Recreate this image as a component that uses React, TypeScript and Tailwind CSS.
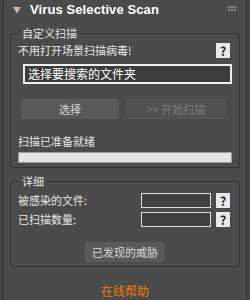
import React from 'react';

const font = { fontFamily: '"Noto Sans CJK SC", "Liberation Sans", sans-serif' };

const Help = () => (
  <div className="w-[14px] h-[15px] bg-[#e8e8e8] flex items-center justify-center text-[12px] leading-none font-bold text-[#222]">
    ?
  </div>
);

const App = () => {
  return (
    <div className="w-[250px] h-[300px] overflow-hidden bg-[#444444] px-[3px]" style={font}>
      <div className="h-[320px] -mt-[2px] border border-[#363636] rounded-[3px] bg-[#4b4b4b]">
        <div className="h-[22px] flex items-center pl-[9px] pr-[10px]">
          <span className="text-[#bdbdbd] text-[8px] mr-[9px]">▼</span>
          <span className="text-white font-bold text-[13px] tracking-[0.1px]" style={{ fontFamily: '"Liberation Sans", sans-serif' }}>
            Virus Selective Scan
          </span>
          <div className="ml-auto grid grid-cols-3 gap-[1px] -mt-[3px]">
            {Array.from({ length: 6 }).map((_, i) => (
              <div key={i} className="w-[2px] h-[2px] bg-[#8a8a8a]" />
            ))}
          </div>
        </div>

        <fieldset className="mx-[6px] mt-[5px] h-[142px] border border-[#333] rounded-[3px] px-[7px]">
          <legend className="ml-[1px] px-[3px] text-[11px] leading-[14px] text-[#e6e6e6]">自定义扫描</legend>
          <div className="flex items-center justify-between h-[17px] mt-[2px]">
            <span className="text-[11px] text-[#e6e6e6]">不用打开场景扫描病毒!</span>
            <div className="mr-[2px]"><Help /></div>
          </div>
          <div className="mt-[5px] ml-[5px] h-[20px] border-2 border-[#efefef] bg-[#3c3c3c] flex items-center px-[3px] text-[12px] text-white">
            选择要搜索的文件夹
          </div>
          <div className="mt-[15px] flex gap-[8px] pl-[3px]">
            <div className="w-[98px] h-[20px] rounded-[3px] bg-[#595959] flex items-center justify-center text-[11px] text-[#d6d6d6]">选择</div>
            <div className="w-[98px] h-[20px] rounded-[3px] bg-[#515151] border border-[#575757] flex items-center justify-center text-[11px] text-[#7c7c7c]">&gt;&gt; 开始扫描</div>
          </div>
          <div className="mt-[15px] text-[11px] text-[#e6e6e6] h-[15px] leading-[15px]">扫描已准备就绪</div>
          <div className="mt-[3px] h-[11px] bg-[#e4e4e4] border border-[#999]" />
        </fieldset>

        <fieldset className="mx-[6px] mt-[6px] h-[93px] border border-[#333] rounded-[3px] px-[7px]">
          <legend className="ml-[1px] px-[3px] text-[11px] leading-[14px] text-[#e6e6e6]">详细</legend>
          <div className="flex items-center h-[15px] mt-[5px]">
            <span className="text-[11px] text-[#e6e6e6]">被感染的文件:</span>
            <div className="ml-auto w-[70px] h-[15px] border border-[#ddd] bg-[#404040]" />
            <div className="ml-[5px] mr-[2px]"><Help /></div>
          </div>
          <div className="flex items-center h-[15px] mt-[4px]">
            <span className="text-[11px] text-[#e6e6e6]">已扫描数量:</span>
            <div className="ml-auto w-[70px] h-[15px] border border-[#ddd] bg-[#404040]" />
            <div className="ml-[5px] mr-[2px]"><Help /></div>
          </div>
          <div className="mt-[15px] flex justify-center">
            <div className="w-[80px] h-[20px] rounded-[3px] bg-[#5a5a5a] flex items-center justify-center text-[11px] text-[#d6d6d6]">已发现的威胁</div>
          </div>
        </fieldset>

        <div className="mt-[15px] text-center text-[12px] text-[#f07a00]">在线帮助</div>
      </div>
    </div>
  );
};

export default App;
